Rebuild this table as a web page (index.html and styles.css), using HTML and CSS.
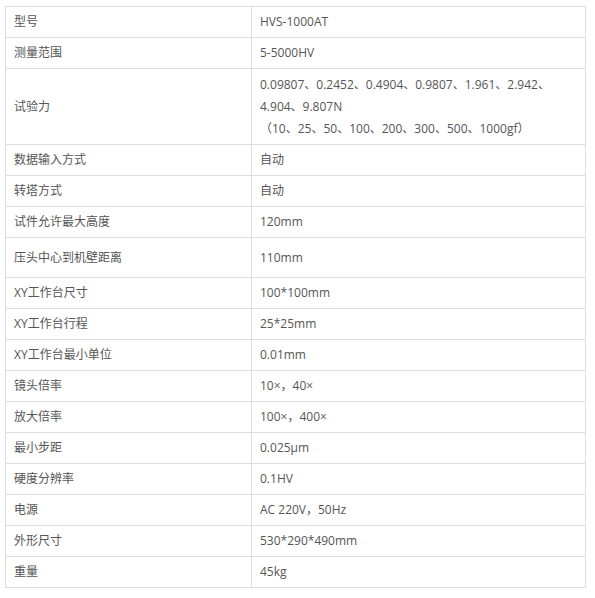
FILE: index.html
```html
<!DOCTYPE html>
<html lang="zh-CN">
<head>
<meta charset="utf-8">
<title>参数</title>
<link rel="stylesheet" href="styles.css">
</head>
<body>
<div class="wrap">
<table class="spec">
<colgroup><col class="c1"><col class="c2"></colgroup>
<tbody>
<tr><td>型号</td><td>HVS-1000AT</td></tr>
<tr><td>测量范围</td><td>5-5000HV</td></tr>
<tr class="multi"><td>试验力</td><td>0.09807、0.2452、0.4904、0.9807、1.961、2.942、4.904、9.807N<br>（10、25、50、100、200、300、500、1000gf）</td></tr>
<tr><td>数据输入方式</td><td>自动</td></tr>
<tr><td>转塔方式</td><td>自动</td></tr>
<tr><td>试件允许最大高度</td><td>120mm</td></tr>
<tr class="tall"><td>压头中心到机壁距离</td><td>110mm</td></tr>
<tr><td>XY工作台尺寸</td><td>100*100mm</td></tr>
<tr><td>XY工作台行程</td><td>25*25mm</td></tr>
<tr><td>XY工作台最小单位</td><td>0.01mm</td></tr>
<tr><td>镜头倍率</td><td>10×，40×</td></tr>
<tr><td>放大倍率</td><td>100×，400×</td></tr>
<tr><td>最小步距</td><td>0.025μm</td></tr>
<tr><td>硬度分辨率</td><td>0.1HV</td></tr>
<tr><td>电源</td><td>AC 220V，50Hz</td></tr>
<tr><td>外形尺寸</td><td>530*290*490mm</td></tr>
<tr><td>重量</td><td>45kg</td></tr>
</tbody>
</table>
</div>
</body>
</html>
```
FILE: styles.css
```css
html, body {
  margin: 0;
  padding: 0;
  background: #fff;
}
.wrap {
  padding: 6px 0 0 5px;
}
.spec {
  border-collapse: collapse;
  table-layout: fixed;
  width: 581px;
  font-family: "Open Sans", "Noto Sans CJK SC", sans-serif;
  font-size: 12px;
  line-height: 22px;
  color: #555;
}
.c1 { width: 246px; }
.spec td {
  border: 1px solid #ddd;
  padding: 4px 7px 4px 8px;
  vertical-align: middle;
  text-align: left;
}
.multi td {
  padding-top: 5px;
}
.tall td {
  height: 31px;
}
```
